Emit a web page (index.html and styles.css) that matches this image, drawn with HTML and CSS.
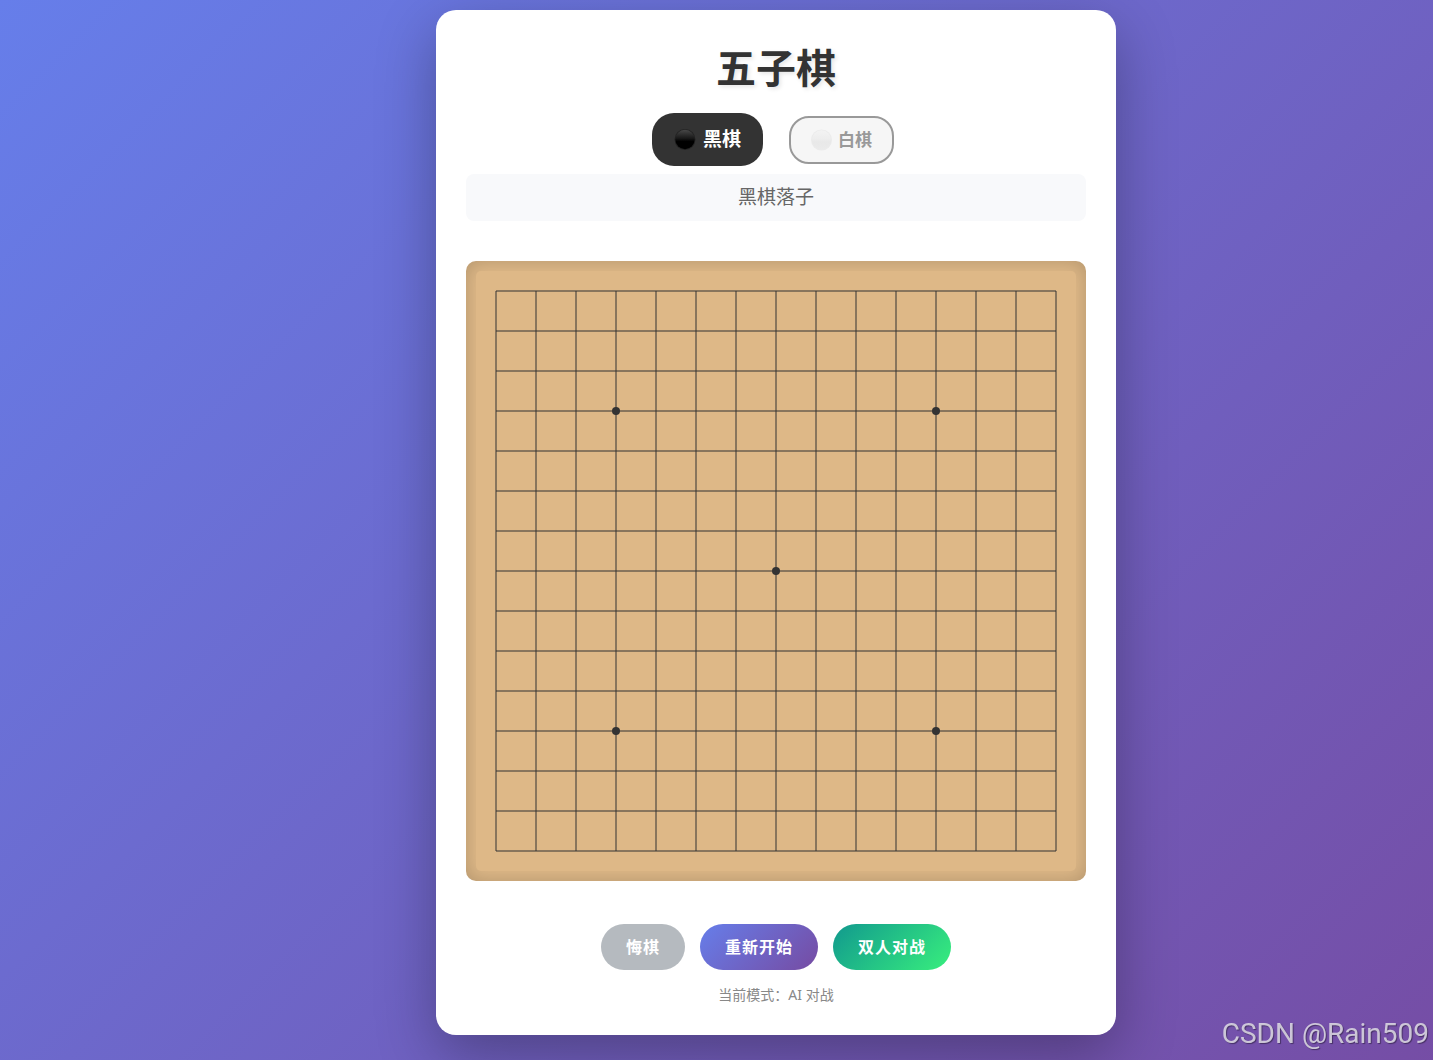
FILE: index.html
```html
<!DOCTYPE html>
<html lang="zh-CN">
<head>
<meta charset="UTF-8">
<meta name="viewport" content="width=device-width, initial-scale=1">
<title>五子棋</title>
<link rel="stylesheet" href="styles.css">
</head>
<body>
<main class="game">
  <h1 class="title">五子棋</h1>
  <div class="players">
    <button class="player player-black" type="button">
      <svg class="stone" viewBox="0 0 22 22" aria-hidden="true">
        <defs>
          <linearGradient id="black-gloss" x1="0" y1="0" x2="0" y2="1">
            <stop offset="0" stop-color="#484848"/>
            <stop offset="0.45" stop-color="#171717"/>
            <stop offset="0.6" stop-color="#000"/>
            <stop offset="1" stop-color="#000"/>
          </linearGradient>
        </defs>
        <circle cx="11" cy="10.5" r="10.5" fill="#232323"/>
        <circle cx="11" cy="10.5" r="9.7" fill="url(#black-gloss)"/>
      </svg>
      <span>黑棋</span>
    </button>
    <button class="player player-white" type="button">
      <svg class="stone" viewBox="0 0 22 22" aria-hidden="true">
        <defs>
          <linearGradient id="white-gloss" x1="0" y1="0" x2="0" y2="1">
            <stop offset="0" stop-color="#f3f3f3"/>
            <stop offset="0.45" stop-color="#ededed"/>
            <stop offset="0.6" stop-color="#e8e8e8"/>
            <stop offset="1" stop-color="#ebebeb"/>
          </linearGradient>
        </defs>
        <circle cx="10.5" cy="11" r="10.5" fill="#ebebeb"/>
        <circle cx="10.5" cy="11" r="9.7" fill="url(#white-gloss)"/>
      </svg>
      <span>白棋</span>
    </button>
  </div>
  <div class="status" role="status">黑棋落子</div>
  <div class="board">
    <svg class="grid" viewBox="0 0 600 600" role="img" aria-label="棋盘">
      <path class="lines" d="M20 20H580M20 60H580M20 100H580M20 140H580M20 180H580M20 220H580M20 260H580M20 300H580M20 340H580M20 380H580M20 420H580M20 460H580M20 500H580M20 540H580M20 580H580"/>
      <path class="lines" d="M20 20V580M60 20V580M100 20V580M140 20V580M180 20V580M220 20V580M260 20V580M300 20V580M340 20V580M380 20V580M420 20V580M460 20V580M500 20V580M540 20V580M580 20V580"/>
      <g class="stars">
        <circle cx="140" cy="140" r="4"/>
        <circle cx="460" cy="140" r="4"/>
        <circle cx="300" cy="300" r="4"/>
        <circle cx="140" cy="460" r="4"/>
        <circle cx="460" cy="460" r="4"/>
      </g>
    </svg>
  </div>
  <div class="controls">
    <button class="control control-undo" type="button">悔棋</button>
    <button class="control control-restart" type="button">重新开始</button>
    <button class="control control-mode" type="button">双人对战</button>
  </div>
  <p class="mode">当前模式：AI 对战</p>
</main>
<div class="watermark">CSDN @Rain509</div>
</body>
</html>
```

FILE: styles.css
```css
* {
  box-sizing: border-box;
  margin: 0;
  padding: 0;
}

body {
  display: flex;
  justify-content: center;
  align-items: flex-start;
  min-height: 100vh;
  padding: 10px 0 25px 119px;
  background: linear-gradient(135deg, #667eea 0%, #764ba2 100%) 0 0 / calc(100% + 119px) 100% no-repeat;
  font-family: "Noto Sans", "Noto Sans CJK SC", sans-serif;
}

.game {
  width: 100%;
  max-width: 680px;
  padding: 30px;
  border-radius: 20px;
  background: #fff;
  box-shadow: 0 20px 60px rgba(0, 0, 0, 0.3);
  text-align: center;
}

.title {
  margin-bottom: 17px;
  color: #333;
  font-size: 40px;
  line-height: 56px;
  text-shadow: 2px 2px 4px rgba(0, 0, 0, 0.1);
}

.players {
  display: flex;
  justify-content: center;
  align-items: center;
  gap: 26px;
  margin-bottom: 8px;
  padding-right: 6px;
}

.player {
  display: flex;
  align-items: center;
  font-family: inherit;
  font-weight: bold;
  cursor: pointer;
}

.player-black {
  gap: 7px;
  padding: 12px 22px;
  border: 0;
  border-radius: 22px;
  background: #333;
  color: #fff;
  font-size: 19px;
  line-height: 29px;
}

.player-white {
  gap: 5px;
  padding: 10px 20px;
  border: 2px solid #999;
  border-radius: 20px;
  background: #f6f6f6;
  color: #999;
  font-size: 17px;
  line-height: 24px;
}

.stone {
  width: 22px;
  height: 22px;
}

.status {
  padding: 10px;
  border-radius: 8px;
  background: #f8f9fb;
  color: #666;
  font-size: 19px;
  line-height: 27px;
}

.board {
  margin: 40px 0 43px;
  padding: 10px;
  border-radius: 10px;
  background: #deb887;
  box-shadow: inset 0 0 20px rgba(0, 0, 0, 0.2);
}

.grid {
  display: block;
  width: 100%;
  border-radius: 5px;
  background: #deb887;
}

.lines {
  fill: none;
  stroke: #333;
  stroke-width: 1;
}

.stars {
  fill: #333;
}

.controls {
  display: flex;
  justify-content: center;
  gap: 15px;
  margin-bottom: 15px;
}

.control {
  padding: 11px 25px;
  border: 0;
  border-radius: 25px;
  color: #fff;
  font-family: inherit;
  font-size: 16px;
  font-weight: bold;
  line-height: 24px;
  letter-spacing: 1px;
  cursor: pointer;
}

.control-undo {
  background: #b5babf;
}

.control-restart {
  background: linear-gradient(135deg, #667eea 0%, #764ba2 100%);
}

.control-mode {
  background: linear-gradient(135deg, #11998e 0%, #38ef7d 100%);
}

.mode {
  color: #888;
  font-size: 14px;
  line-height: 20px;
}

.watermark {
  position: fixed;
  right: 4px;
  bottom: 8px;
  color: rgba(225, 222, 230, 0.85);
  font-family: Roboto, sans-serif;
  font-size: 28px;
  font-weight: 400;
  line-height: 36px;
  text-shadow: 1px 1px 1px rgba(0, 0, 0, 0.4);
}
```
